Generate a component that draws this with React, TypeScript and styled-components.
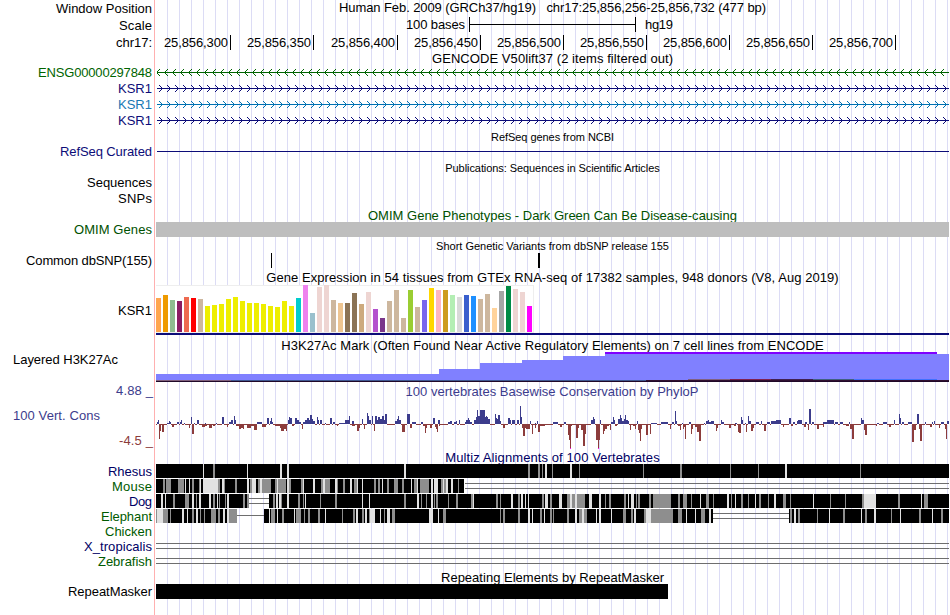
import React from "react";
import styled, { createGlobalStyle } from "styled-components";

const FONT = '"Liberation Sans", Arial, Helvetica, sans-serif';
const LEFT = 156;
const RIGHT = 950;

const GlobalStyle = createGlobalStyle`
  body { margin: 0; background: #fff; overflow: hidden; }
`;

const Browser = styled.main`
  width: 950px;
  height: 615px;
  overflow: hidden;
  display: flex;
  flex-direction: column;
  font-family: ${FONT};
  color: #000;
  background:
    linear-gradient(#ffb0b0, #ffb0b0) 154px 0 / 1px 100% no-repeat,
    repeating-linear-gradient(90deg, #dcdcf5 0 1px, transparent 1px 12px) 167px 0 / 783px 100% no-repeat,
    #fff;
`;

const Row = styled.div<{ $h: number; $gap?: number }>`
  display: grid;
  grid-template-columns: ${LEFT}px 1fr;
  grid-template-rows: 100%;
  height: ${(p) => p.$h}px;
  margin-top: ${(p) => p.$gap ?? 0}px;
  flex: none;
`;

const LabelCell = styled.div<{ $left?: boolean; $lift?: number }>`
  display: flex;
  align-items: center;
  justify-content: ${(p) => (p.$left ? "flex-start" : "flex-end")};
  padding: 0 4px ${(p) => p.$lift ?? 0}px ${(p) => (p.$left ? 13 : 0)}px;
`;

const TitleCell = styled.div<{ $lift?: number; $drop?: number }>`
  display: flex;
  align-items: center;
  justify-content: center;
  padding: ${(p) => p.$drop ?? 0}px 1px ${(p) => p.$lift ?? 0}px 0;
`;

const Text = styled.span<{ $size: number; $color: string; $tracking: number }>`
  font-size: ${(p) => p.$size}px;
  line-height: 15px;
  white-space: pre;
  color: ${(p) => p.$color};
  letter-spacing: ${(p) => p.$tracking}px;
  margin-right: ${(p) => -p.$tracking}px;
`;

const Chart = styled.svg`
  display: block;
  shape-rendering: crispEdges;
`;

const ScaleBar = styled.div`
  display: flex;
  align-items: center;
  padding: 0 0 2px 250px;
  gap: 3px;
`;

const Bracket = styled.div`
  width: 165px;
  height: 15px;
  margin: 0 6px 0 1px;
  border: solid #000;
  border-width: 0 1px;
  background: linear-gradient(#000, #000) 0 7px / 100% 1px no-repeat;
`;

const Ruler = styled.div`
  display: flex;
  align-items: center;
`;

const RulerMark = styled.div<{ $w: number }>`
  box-sizing: border-box;
  width: ${(p) => p.$w}px;
  height: 15px;
  display: flex;
  align-items: center;
  justify-content: flex-end;
  padding-right: 2px;
  border-right: 1px solid #000;
`;

const AxisLabels = styled.div`
  display: flex;
  flex-direction: column;
  align-items: flex-end;
  padding-right: 3px;
`;

const AxisName = styled.div`
  align-self: flex-start;
  padding-left: 13px;
  margin: 10px 0 10px;
  display: flex;
`;

const PlotTitle = styled.div`
  box-sizing: border-box;
  height: 14px;
  display: flex;
  justify-content: center;
  padding: 1px 2px 0 0;
`;

const ctx = document.createElement("canvas").getContext("2d")!;

function Fit({ t, w, size = 13, color = "#000" }: { t: string; w: number; size?: number; color?: string }) {
  ctx.font = `${size}px ${FONT}`;
  const tracking = (w - ctx.measureText(t).width) / (t.length - 1);
  return (
    <Text $size={size} $color={color} $tracking={Number(tracking.toFixed(3))}>
      {t}
    </Text>
  );
}

type TitleProps = { t: string; w: number; h: number; gap?: number; size?: number; color?: string; drop?: number };

function Title({ t, w, h, gap, size, color, drop }: TitleProps) {
  return (
    <Row $h={h} $gap={gap}>
      <span />
      <TitleCell $drop={drop}>
        <Fit t={t} w={w} size={size} color={color} />
      </TitleCell>
    </Row>
  );
}

type TrackProps = {
  label?: string;
  w?: number;
  h: number;
  gap?: number;
  lift?: number;
  color?: string;
  left?: boolean;
  children?: React.ReactNode;
};

function Track({ label, w = 0, h, gap, lift, color, left, children }: TrackProps) {
  return (
    <Row $h={h} $gap={gap}>
      <LabelCell $left={left} $lift={lift}>
        {label && <Fit t={label} w={w} color={color} />}
      </LabelCell>
      {children}
    </Row>
  );
}

function Plot({ h, children }: { h: number; children: React.ReactNode }) {
  return (
    <Chart width={RIGHT - LEFT} height={h} viewBox={`${LEFT} 0 ${RIGHT - LEFT} ${h}`}>
      {children}
    </Chart>
  );
}

function Gene({ color, reverse }: { color: string; reverse?: boolean }) {
  let d = "";
  for (let i = 0; i < 99; i++) {
    const tip = (reverse ? 156 : 162) + i * 8;
    for (let k = 1; k <= 3; k++) {
      const x = reverse ? tip + k : tip - k;
      d += `M${x} ${7 - k}h1v1h-1zM${x} ${7 + k}h1v1h-1z`;
    }
  }
  return (
    <Plot h={16}>
      <rect x={157} y={7} width={792} height={1} fill={color} />
      <path d={d} fill={color} />
    </Plot>
  );
}

const TISSUES: [string, number][] = [
  ["#ffa54f", 34], ["#ee9a00", 37], ["#8fbc8f", 32], ["#8b1c62", 31], ["#ee6a50", 35], ["#ff0000", 34],
  ["#cdb79e", 33], ["#eeee00", 26], ["#eeee00", 27], ["#eeee00", 28], ["#eeee00", 33], ["#eeee00", 35],
  ["#eeee00", 31], ["#eeee00", 29], ["#eeee00", 29], ["#eeee00", 28], ["#eeee00", 26], ["#eeee00", 25],
  ["#eeee00", 31], ["#eeee00", 26], ["#00cdcd", 34], ["#ee82ee", 47], ["#9ac0cd", 19], ["#eed5d2", 45],
  ["#eed5d2", 47], ["#cdb79e", 32], ["#eec591", 29], ["#8b7355", 29], ["#8b7355", 39], ["#cdaa7d", 28],
  ["#eed5d2", 40], ["#b452cd", 23], ["#7a378b", 14], ["#cdb79e", 31], ["#cdb79e", 42], ["#cdb79e", 14],
  ["#9acd32", 42], ["#cdb79e", 25], ["#7a67ee", 32], ["#ffd700", 44], ["#ffb6c1", 42], ["#cd9b1d", 42],
  ["#b4eeb4", 37], ["#d9d9d9", 35], ["#3a5fcd", 37], ["#1e90ff", 36], ["#cdb79e", 33], ["#cdb79e", 38],
  ["#ffd39b", 24], ["#a6a6a6", 41], ["#008b45", 46], ["#eed5d2", 43], ["#eed5d2", 40], ["#ff00ff", 26],
];

// Conservation peaks as "x,width,height" triples.
const UP = `157,1,2 158,1,4 167,2,1 169,1,3 170,1,2 177,2,2 180,1,2 181,1,4 184,1,1 191,1,7 194,1,1 197,2,4 205,1,1 216,1,1
222,2,7 229,2,2 231,2,4 234,1,8 235,1,4 257,5,2 267,2,6 270,1,3 271,1,6 272,1,2 288,1,4 289,1,7 290,2,6 295,2,6 297,2,4
299,2,2 303,3,2 305,2,4 307,2,6 309,1,4 310,2,9 312,1,5 313,2,3 317,1,7 318,1,4 320,2,4 325,1,1 330,2,6 333,2,2 339,6,1
345,4,4 349,1,8 352,2,3 362,1,5 367,1,11 368,1,8 369,2,4 372,1,8 375,2,8 377,1,4 378,2,7 380,2,5 382,2,8 384,1,4 385,2,10
395,2,3 397,1,5 398,1,8 399,2,4 407,3,10 412,4,2 421,2,2 433,2,6 438,2,4 448,2,2 450,2,3 454,2,2 456,1,3 459,1,4
465,1,2 466,2,4 468,1,6 469,1,4 470,2,2 474,2,4 476,1,7 477,1,14 478,2,8 480,5,14 485,1,7 486,1,8 487,1,7 488,2,5
495,1,10 496,1,6 497,1,5 498,2,9 500,1,3 508,2,6 510,1,4 512,3,4 517,2,4 520,1,18 521,1,7 530,1,3 535,1,1 537,1,3
553,5,2 564,2,2 591,2,4 593,1,7 594,1,5 600,1,4 611,2,2 613,1,7 614,1,4 618,2,5 620,1,9 621,1,6 622,2,3 624,1,5 625,1,9
626,2,4 628,1,3 637,1,3 651,6,1 661,2,2 663,5,2 672,2,2 675,1,13 676,1,3 682,1,1 689,2,2 704,1,1 706,2,3 708,1,4
709,2,2 711,3,3 721,1,4 722,2,2 735,2,1 741,1,7 742,1,4 745,1,1 748,1,8 749,2,3 756,3,2 761,1,3 767,3,2 771,2,3 773,3,3
776,5,4 789,2,6 793,2,2 797,1,3 798,4,4 805,2,2 809,2,15 812,2,2 823,4,2 827,7,4 835,3,2 840,3,2 849,1,2 861,1,6
862,2,4 877,2,1 883,4,2 894,1,4 899,1,10 900,1,6 902,2,2 908,4,2 917,2,10 925,1,2 932,1,2 934,1,3 941,3,2 947,2,3`;

const DOWN = `159,1,15 160,1,7 162,2,8 172,2,3 189,1,4 192,2,10 202,3,3 205,2,2 209,3,4 213,2,2 227,1,3 236,3,2 239,2,5
241,2,4 243,1,5 247,4,4 251,3,2 254,3,6 262,4,3 275,5,2 280,1,4 281,3,7 284,2,5 286,1,7 292,2,2 302,1,5 337,1,2 352,3,2
357,2,7 359,1,4 364,1,5 374,1,7 402,3,8 410,2,4 423,2,2 425,1,9 426,1,4 430,2,4 435,1,3 436,1,5 437,1,8 439,1,2 503,2,4
522,1,4 523,2,12 525,1,4 526,4,5 532,1,10 535,1,4 538,2,8 540,5,2 560,2,3 568,1,11 569,1,16 570,1,25 571,1,2 576,2,14
578,1,4 581,2,6 583,2,22 585,1,10 596,2,16 598,1,25 599,1,16 603,1,10 604,1,7 605,2,5 607,2,2 610,1,6 615,2,2 630,1,6
633,2,2 635,1,5 638,1,6 639,1,9 640,1,17 641,1,5 646,2,11 650,1,10 670,1,5 678,2,2 680,1,6 683,1,5 684,1,3 685,1,15
691,1,10 692,1,5 695,2,3 697,2,8 699,2,17 716,1,7 717,1,4 729,2,4 734,2,2 738,1,8 739,2,9 746,1,8 751,2,7 753,1,4
764,2,7 783,1,3 791,2,2 804,2,3 808,1,6 817,2,5 823,1,3 846,3,2 850,2,5 852,2,15 864,1,6 865,2,11 876,1,2 889,2,3
912,2,18 914,2,6 919,1,5 920,2,17 930,2,3 939,1,4 945,1,5 946,1,15`;

const triples = (s: string) => s.trim().split(/\s+/).map((v) => v.split(",").map(Number));

function Conservation() {
  const zero = 27;
  return (
    <Plot h={53}>
      <rect x={156} y={zero} width={793} height={1} fill="#8c3c3c" />
      {triples(UP).map(([x, w, h]) => (
        <React.Fragment key={x}>
          <rect x={x} y={zero} width={w} height={1} fill="#fff" />
          <rect x={x} y={zero - h} width={w} height={h} fill="#3c3c8c" />
        </React.Fragment>
      ))}
      {triples(DOWN).map(([x, w, h]) => (
        <rect key={x} x={x} y={zero} width={w} height={h} fill="#8c3c3c" />
      ))}
      <rect x={570} y={51} width={1} height={1} fill="#ff00ff" />
      <rect x={598} y={51} width={1} height={1} fill="#ff00ff" />
    </Plot>
  );
}

// Alignment blocks: black spans, overlaid by marks written as x + shade (L light, g gray) + width.
type Alignment = { spans: [number, number][]; marks: string; gaps?: [number, number, 1 | 2][] };

const RHESUS: Alignment = {
  spans: [[156, 949]],
  marks: "203L1 213g2 247L1 280L2 287L2 404L2 528g2 538g2 542g1 545L2 552g1 570L2 579g1 643g1 680g2 730g1 758g1 785L2 860g1",
};
const MOUSE: Alignment = {
  spans: [[156, 464]],
  gaps: [[465, 949, 2]],
  marks: `163g2 166g5 178g6 185L1 189L1 192g2 199g1 200L1 203L15 218g2 222L2 224g1 235g2 247L2 250g2 252L4 258g2 260L2 262g9 275g2
277L1 278g8 287L2 289g2 301g2 303L1 313L2 321g2 323L2 325g5 335L2 337g1 343g2 350L2 354g3 357L1 362L1 374g2 378g2 382L1 387g2
394g4 402g2 411L1 414g3 417L1 420g9 431L2 434L4 441g2 443L1 444g2 446L2 451L2 458g1`,
};
const DOG: Alignment = {
  spans: [[156, 249], [269, 949]],
  gaps: [[249, 269, 2]],
  marks: `161L2 165L1 173g2 185g4 192L2 196g1 199L2 209L2 213g2 217L1 219g1 225g1 227L2 243g2 247g2 273g2 276L2 279L2 281g1 287L2
298g2 303g1 305L1 320g1 335g2 362L1 369L1 404g2 417L2 421g1 426g1 431L2 434g1 436g2 448g1 456g2 471g2 473L1 496g2 500g1 511L2
518g2 521L2 525L1 528L1 542g2 545L3 550g2 559L3 567g3 570L2 572g3 575L2 577g8 589L3 599L2 605g1 609g2 624g2 628L1 631L3 636g1
638g2 649g2 653g18 678g2 683g4 691g1 700L1 706g3 713g1 727L2 731g1 735L1 741g2 748g1 755L1 759g2 768g1 774L2 783g3 790g1
813L1 830g1 845g1 862g2 864L12 898g2 921L1 924g4`,
};
const ELEPHANT: Alignment = {
  spans: [[156, 237], [264, 713], [789, 949]],
  gaps: [[237, 264, 1], [713, 789, 2]],
  marks: `156g1 157L6 163g5 170g1 182L2 187L1 192g2 196L2 200g1 204g1 211g5 218g2 223L2 227L2 229g8 269L1 271g4 277L1 282g2 294L1
296g5 304g1 308g2 318g2 325L1 342g1 353g2 356L2 362g2 365L2 369g1 370L5 380L1 384g1 387L3 392g3 429L4 438L1 443g3 500g1
503g2 518g2 528L2 532L1 540g2 544L1 550g2 553g1 567g2 575L2 579g3 582L2 584g3 596L1 599L2 611L1 623g3 631g2 634L2 644g2
646L5 651g22 678g4 686L1 695L1 701g4 709L2 790g2 794L2 798g2 817g1 829L1 843g2 861L1 865g2 874L2 891g1 900L1 919g2 932L1 941g2`,
};
const UNALIGNED: Alignment = { spans: [], marks: "", gaps: [[156, 949, 2]] };

function Blocks({ data }: { data: Alignment }) {
  return (
    <Plot h={15}>
      {data.gaps?.map(([a, b, kind]) => (
        <g key={a} fill="#6e6e6e">
          {kind === 1 ? (
            <rect x={a} y={6} width={b - a} height={1} />
          ) : (
            <>
              <rect x={a} y={4} width={b - a} height={1} />
              <rect x={a} y={9} width={b - a} height={1} />
            </>
          )}
        </g>
      ))}
      {data.spans.map(([a, b]) => (
        <rect key={a} x={a} y={0} width={b - a} height={14} />
      ))}
      {data.marks
        .split(/\s+/)
        .filter(Boolean)
        .map((m) => {
          const [, x, shade, w] = /(\d+)([Lg])(\d+)/.exec(m)!;
          return <rect key={m} x={x} y={0} width={w} height={14} fill={shade === "L" ? "#e1e1e1" : "#8e8e8e"} />;
        })}
    </Plot>
  );
}

const NAVY = "#0c0c78";
const GREEN = "#006400";
const RULER: [string, number][] = [
  ["25,856,300", 75], ["25,856,350", 83], ["25,856,400", 84], ["25,856,450", 83], ["25,856,500", 83],
  ["25,856,550", 83], ["25,856,600", 83], ["25,856,650", 83], ["25,856,700", 83],
];

export default function App() {
  return (
    <Browser>
      <GlobalStyle />
      <Track label="Window Position" w={96} h={17}>
        <TitleCell $lift={2}>
          <Fit t="Human Feb. 2009 (GRCh37/hg19)   chr17:25,856,256-25,856,732 (477 bp)" w={427} />
        </TitleCell>
      </Track>
      <Track label="Scale" w={33} h={17}>
        <ScaleBar>
          <Fit t="100 bases" w={59} />
          <Bracket />
          <Fit t="hg19" w={28} />
        </ScaleBar>
      </Track>
      <Track label="chr17:" w={36} h={17}>
        <Ruler>
          {RULER.map(([t, w]) => (
            <RulerMark key={t} $w={w}>
              <Fit t={t} w={64} />
            </RulerMark>
          ))}
        </Ruler>
      </Track>
      <Title t="GENCODE V50lift37 (2 items filtered out)" w={241} h={14} />
      <Track label="ENSG00000297848" w={114} h={16} lift={1} color={GREEN}>
        <Gene color={GREEN} reverse />
      </Track>
      <Track label="KSR1" w={34} h={16} lift={1} color={NAVY}>
        <Gene color={NAVY} />
      </Track>
      <Track label="KSR1" w={34} h={16} lift={1} color="#1878b4">
        <Gene color="#0072b2" />
      </Track>
      <Track label="KSR1" w={34} h={16} lift={1} color={NAVY}>
        <Gene color={NAVY} />
      </Track>
      <Title t="RefSeq genes from NCBI" w={123} h={16} size={11} />
      <Track label="RefSeq Curated" w={92} h={14} lift={1} color={NAVY}>
        <Plot h={14}>
          <rect x={157} y={6} width={792} height={1} fill={NAVY} />
        </Plot>
      </Track>
      <Title t="Publications: Sequences in Scientific Articles" w={215} h={16} gap={1} size={11} />
      <Track label="Sequences" w={65} h={15} lift={2} />
      <Track label="SNPs" w={34} h={15} />
      <Title t="OMIM Gene Phenotypes - Dark Green Can Be Disease-causing" w={369} h={15} gap={1} drop={2} color="#005000" />
      <Track label="OMIM Genes" w={78} h={15} color="#005000">
        <Plot h={15}>
          <rect x={156} y={0} width={793} height={15} fill="#bebebe" />
        </Plot>
      </Track>
      <Title t="Short Genetic Variants from dbSNP release 155" w={233} h={15} gap={1} drop={2} size={11} />
      <Track label="Common dbSNP(155)" w={126} h={15}>
        <Plot h={15}>
          <rect x={271} y={0} width={1} height={15} />
          <rect x={538} y={0} width={2} height={15} />
        </Plot>
      </Track>
      <Title t="Gene Expression in 54 tissues from GTEx RNA-seq of 17382 samples, 948 donors (V8, Aug 2019)" w={573} h={15} gap={2} />
      <Track label="KSR1" w={34} h={51}>
        <Plot h={51}>
          <rect x={156} y={0} width={378} height={48} fill="#eee" />
          <rect x={156} y={1} width={377} height={46} fill="#fff" />
          {TISSUES.map(([fill, v], i) => (
            <rect key={i} x={156 + i * 7} y={47 - v} width={5} height={v} fill={fill} />
          ))}
          <rect x={156} y={48} width={793} height={2} fill={NAVY} />
        </Plot>
      </Track>
      <Title t="H3K27Ac Mark (Often Found Near Active Regulatory Elements) on 7 cell lines from ENCODE" w={543} h={15} gap={1} drop={2} />
      <Track label="Layered H3K27Ac" w={105} h={15} left>
        <Plot h={30}>
          <path d="M156 22H439V17H480V11H522V8H563V4H605V2H949V29H156Z" fill="#8080ff" />
          <rect x={605} y={0} width={332} height={2} fill="#8000ff" />
          <rect x={156} y={28} width={75} height={1} fill="#80607c" />
          <rect x={231} y={28} width={415} height={1} fill="#405890" />
          <rect x={646} y={28} width={303} height={1} fill="#301030" />
          <rect x={688} y={27} width={42} height={1} fill="#806080" />
          <rect x={730} y={27} width={41} height={1} fill="#802050" />
          <rect x={771} y={27} width={42} height={1} fill="#402050" />
          <rect x={813} y={27} width={41} height={1} fill="#406080" />
          <rect x={854} y={27} width={83} height={1} fill="#4070ff" />
          <rect x={156} y={29} width={793} height={1} fill="#200828" />
        </Plot>
      </Track>
      <Row $h={67} $gap={16}>
        <AxisLabels>
          <Fit t="4.88 _" w={37} color="#3c3c8c" />
          <AxisName>
            <Fit t="100 Vert. Cons" w={87} color="#3c3c8c" />
          </AxisName>
          <Fit t="-4.5 _" w={34} color="#8c3c3c" />
        </AxisLabels>
        <div>
          <PlotTitle>
            <Fit t="100 vertebrates Basewise Conservation by PhyloP" w={293} color="#3c3c8c" />
          </PlotTitle>
          <Conservation />
        </div>
      </Row>
      <Title t="Multiz Alignments of 100 Vertebrates" w={215} h={14} color="#000064" />
      <Track label="Rhesus" w={44} h={15} color="#000064">
        <Blocks data={RHESUS} />
      </Track>
      <Track label="Mouse" w={40} h={15} color="#005a00">
        <Blocks data={MOUSE} />
      </Track>
      <Track label="Dog" w={23} h={15} color="#000064">
        <Blocks data={DOG} />
      </Track>
      <Track label="Elephant" w={51} h={15} color="#005a00">
        <Blocks data={ELEPHANT} />
      </Track>
      <Track label="Chicken" w={47} h={15} color="#005a00" />
      <Track label="X_tropicalis" w={68} h={15} color="#000064">
        <Blocks data={UNALIGNED} />
      </Track>
      <Track label="Zebrafish" w={54} h={15} color="#005a00">
        <Blocks data={UNALIGNED} />
      </Track>
      <Title t="Repeating Elements by RepeatMasker" w={223} h={15} drop={2} />
      <Track label="RepeatMasker" w={84} h={15}>
        <Plot h={15}>
          <rect x={156} y={0} width={512} height={15} />
        </Plot>
      </Track>
    </Browser>
  );
}
